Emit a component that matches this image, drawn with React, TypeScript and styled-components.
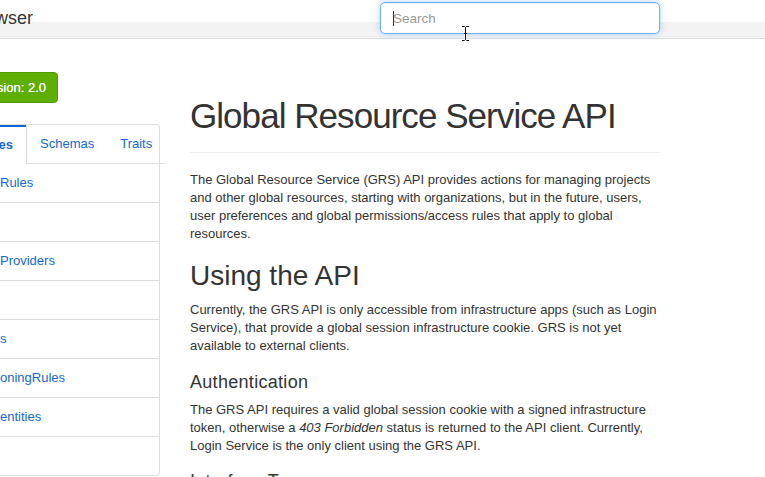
import React from "react";
import styled, { createGlobalStyle } from "styled-components";

const GlobalStyle = createGlobalStyle`
  html, body { margin: 0; padding: 0; background: #fff; }
  body {
    font-family: "Liberation Sans", Arial, Helvetica, sans-serif;
    color: #333;
    font-size: 13px;
    line-height: 18px;
  }
  * { box-sizing: border-box; }
`;

const LINK = "#1269cf";

const Page = styled.div`
  width: 765px;
  height: 477px;
  overflow: hidden;
  background: #fff;
`;

const Navbar = styled.header`
  display: grid;
  grid-template-columns: 33px 347px 280px;
  align-items: start;
  height: 39px;
  border-bottom: 1px solid #dcdcdc;
  background: linear-gradient(#fff 0 22px, #f3f3f3 22px);
`;

const Brand = styled.div`
  display: flex;
  justify-content: flex-end;
  overflow: hidden;
  white-space: nowrap;
  padding-top: 8px;
  font-size: 18px;
  line-height: 20px;
  color: #333;
  & > span { flex: none; }
`;

const SearchWrap = styled.div`
  position: relative;
  grid-column: 3;
  padding-top: 2px;
`;

const SearchInput = styled.input`
  display: block;
  width: 280px;
  height: 32px;
  padding: 0 12px;
  border: 1px solid #6cb0ee;
  border-radius: 5px;
  background: #fff;
  box-shadow: inset 0 1px 1px rgba(0, 0, 0, 0.075), 0 0 6px rgba(102, 175, 233, 0.55);
  font-family: inherit;
  font-size: 13.5px;
  color: #555;
  outline: none;
  &::placeholder { color: #9a9a9a; }
`;

const Caret = styled.span`
  position: absolute;
  left: 13px;
  top: 11px;
  width: 1px;
  height: 15px;
  background: #333;
`;

const MouseCursor = styled.svg`
  position: absolute;
  left: 81px;
  top: 25px;
`;

const Body = styled.div`
  display: flex;
  align-items: flex-start;
`;

const Sidebar = styled.aside`
  flex: none;
  width: 160px;
  padding-top: 33px;
  display: flex;
  flex-direction: column;
`;

const VersionSlot = styled.div`
  width: 58px;
  display: flex;
  justify-content: flex-end;
  overflow: hidden;
`;

const VersionButton = styled.button`
  flex: none;
  height: 31px;
  padding: 0 11px 0 12px;
  white-space: nowrap;
  background: #5fae03;
  border: 1px solid #4f9a00;
  border-radius: 4px;
  color: #fff;
  font-family: inherit;
  font-size: 13px;
  text-shadow: 0 0 0.4px #fff;
`;

const TabsPanel = styled.div`
  margin-top: 21px;
  width: 160px;
  border: 1px solid #ddd;
  border-left: none;
  border-radius: 0 4px 4px 0;
`;

const TabList = styled.div`
  display: flex;
  height: 39px;
`;

const Tab = styled.div<{ $active?: boolean; $fill?: boolean }>`
  position: relative;
  display: flex;
  align-items: center;
  padding: 0 13px;
  white-space: nowrap;
  font-size: 13px;
  color: ${LINK};
  border-bottom: 1px solid #ddd;
  flex: ${(p) => (p.$fill ? "1" : "none")};
  ${(p) =>
    p.$active &&
    `
    width: 27px;
    justify-content: flex-end;
    overflow: hidden;
    font-weight: bold;
    border-bottom: none;
    border-right: 1px solid #ddd;
    & > span { flex: none; }
    &::before {
      content: "";
      position: absolute;
      left: 0;
      right: -1px;
      top: -1px;
      height: 3px;
      background: #0b68d0;
    }
  `}
`;

const ResourceList = styled.ul`
  list-style: none;
  margin: 0;
  padding: 0;
`;

const ResourceItem = styled.li`
  height: 39px;
  display: flex;
  align-items: center;
  border-bottom: 1px solid #ddd;
  font-size: 13px;
  color: ${LINK};
  white-space: nowrap;
  overflow: hidden;
  &:last-child { height: 38px; border-bottom: none; }
`;

const Main = styled.main`
  flex: none;
  width: 470px;
  margin-left: 30px;
`;

const PageHeader = styled.div`
  margin-top: 58px;
  padding-bottom: 16px;
  border-bottom: 1px solid #eee;
`;

const Title = styled.h1`
  margin: 0;
  font-size: 35px;
  line-height: 1.1;
  font-weight: normal;
  letter-spacing: -0.95px;
  color: #333;
`;

const Para = styled.p`
  margin: 0;
  font-size: 13px;
  line-height: 18px;
  em { font-style: italic; }
`;

const Lead = styled(Para)`
  margin-top: 18px;
`;

const H2 = styled.h2`
  margin: 18px 0 10px;
  font-size: 28px;
  line-height: 1.1;
  font-weight: normal;
  color: #333;
`;

const H4 = styled.h4<{ $top?: number }>`
  margin: ${(p) => p.$top ?? 18}px 0 8px;
  font-size: 18px;
  line-height: 1.1;
  font-weight: normal;
  letter-spacing: 0.3px;
  color: #333;
`;

const resources = ["Rules", "", "Providers", "", "s", "oningRules", "entities", ""];

export default function App() {
  return (
    <>
      <GlobalStyle />
      <Page>
        <Navbar>
          <Brand>
            <span>API Browser</span>
          </Brand>
          <SearchWrap>
            <SearchInput placeholder="Search" readOnly />
            <Caret />
            <MouseCursor width="9" height="17" viewBox="0 0 9 17">
              <path
                d="M1 1.5h2.5l1 1 1-1H8M4.5 2.5v12M1 15.5h2.5l1-1 1 1H8M3 8.5h3"
                fill="none"
                stroke="#fff"
                strokeWidth="2.5"
              />
              <path
                d="M1 1.5h2.5l1 1 1-1H8M4.5 2.5v12M1 15.5h2.5l1-1 1 1H8M3 8.5h3"
                fill="none"
                stroke="#111"
                strokeWidth="1"
              />
            </MouseCursor>
          </SearchWrap>
        </Navbar>
        <Body>
          <Sidebar>
            <VersionSlot>
              <VersionButton>Version: 2.0</VersionButton>
            </VersionSlot>
            <TabsPanel>
              <TabList>
                <Tab $active>
                  <span>Resources</span>
                </Tab>
                <Tab>Schemas</Tab>
                <Tab $fill>Traits</Tab>
              </TabList>
              <ResourceList>
                {resources.map((r, i) => (
                  <ResourceItem key={i}>{r}</ResourceItem>
                ))}
              </ResourceList>
            </TabsPanel>
          </Sidebar>
          <Main>
            <PageHeader>
              <Title>Global Resource Service API</Title>
            </PageHeader>
            <Lead>
              The Global Resource Service (GRS) API provides actions for managing projects and other
              global resources, starting with organizations, but in the future, users, user
              preferences and global permissions/access rules that apply to global resources.
            </Lead>
            <H2>Using the API</H2>
            <Para>
              Currently, the GRS API is only accessible from infrastructure apps (such as Login
              Service), that provide a global session infrastructure cookie. GRS is not yet available
              to external clients.
            </Para>
            <H4>Authentication</H4>
            <Para>
              The GRS API requires a valid global session cookie with a signed infrastructure token,
              otherwise a <em>403 Forbidden</em> status is returned to the API client. Currently,
              Login Service is the only client using the GRS API.
            </Para>
            <H4 $top={17}>Interface Types</H4>
          </Main>
        </Body>
      </Page>
    </>
  );
}
